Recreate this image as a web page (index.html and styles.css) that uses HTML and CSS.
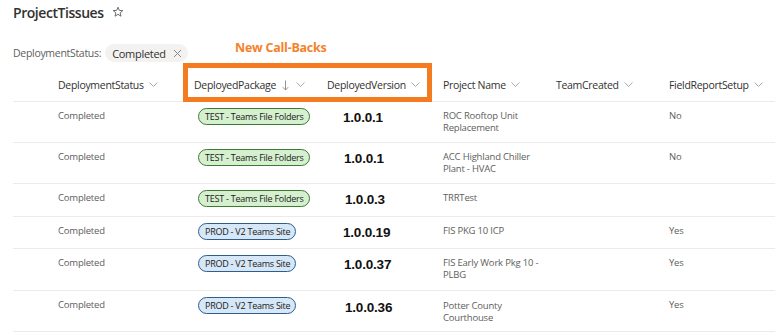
FILE: index.html
```html
<!DOCTYPE html>
<html>
<head>
<meta charset="utf-8">
<link rel="stylesheet" href="styles.css">
</head>
<body>
<div class="page">
  <div class="title">ProjectTissues
    <svg class="star" width="12" height="12" viewBox="0 0 12 12"><path d="M6 1.2 L7.35 4.4 L10.8 4.6 L8.15 6.85 L9 10.2 L6 8.35 L3 10.2 L3.85 6.85 L1.2 4.6 L4.65 4.4 Z" fill="none" stroke="#605e5c" stroke-width="0.9" stroke-linejoin="round"/></svg>
  </div>
  <div class="filters">
    <span class="flabel">DeploymentStatus:</span>
    <span class="chip">Completed <svg class="x" width="9" height="9" viewBox="0 0 9 9"><path d="M1 1 L8 8 M8 1 L1 8" stroke="#8a8886" stroke-width="1"/></svg></span>
  </div>
  <div class="list">
    <div class="row head">
      <div></div>
      <div class="hc">DeploymentStatus <svg class="chev" width="9" height="5" viewBox="0 0 9 5"><path d="M0.5 0.5 L4.5 4.5 L8.5 0.5" fill="none" stroke="#a19f9d" stroke-width="0.9"/></svg></div>
      <div class="hc">DeployedPackage <svg class="sort" width="7" height="11" viewBox="0 0 7 11"><path d="M3.5 0.5 V10 M0.8 7.2 L3.5 10 L6.2 7.2" fill="none" stroke="#8a8886" stroke-width="0.9"/></svg> <svg class="chev" width="9" height="5" viewBox="0 0 9 5"><path d="M0.5 0.5 L4.5 4.5 L8.5 0.5" fill="none" stroke="#a19f9d" stroke-width="0.9"/></svg></div>
      <div class="hc">DeployedVersion <svg class="chev" width="9" height="5" viewBox="0 0 9 5"><path d="M0.5 0.5 L4.5 4.5 L8.5 0.5" fill="none" stroke="#a19f9d" stroke-width="0.9"/></svg></div>
      <div class="hc">Project Name <svg class="chev" width="9" height="5" viewBox="0 0 9 5"><path d="M0.5 0.5 L4.5 4.5 L8.5 0.5" fill="none" stroke="#a19f9d" stroke-width="0.9"/></svg></div>
      <div class="hc">TeamCreated <svg class="chev" width="9" height="5" viewBox="0 0 9 5"><path d="M0.5 0.5 L4.5 4.5 L8.5 0.5" fill="none" stroke="#a19f9d" stroke-width="0.9"/></svg></div>
      <div class="hc">FieldReportSetup <svg class="chev" width="9" height="5" viewBox="0 0 9 5"><path d="M0.5 0.5 L4.5 4.5 L8.5 0.5" fill="none" stroke="#a19f9d" stroke-width="0.9"/></svg></div>
    </div>

    <div class="row tall">
      <div></div>
      <div class="c">Completed</div>
      <div class="c"><span class="pill test">TEST - Teams File Folders</span></div>
      <div class="c"><span class="ver">1.0.0.1</span></div>
      <div class="c">ROC Rooftop Unit<br>Replacement</div>
      <div class="c"></div>
      <div class="c">No</div>
    </div>
    <div class="row tall">
      <div></div>
      <div class="c">Completed</div>
      <div class="c"><span class="pill test">TEST - Teams File Folders</span></div>
      <div class="c"><span class="ver v2">1.0.0.1</span></div>
      <div class="c">ACC Highland Chiller<br>Plant - HVAC</div>
      <div class="c"></div>
      <div class="c">No</div>
    </div>
    <div class="row">
      <div></div>
      <div class="c">Completed</div>
      <div class="c"><span class="pill test">TEST - Teams File Folders</span></div>
      <div class="c"><span class="ver v3">1.0.0.3</span></div>
      <div class="c">TRRTest</div>
      <div class="c"></div>
      <div class="c"></div>
    </div>
    <div class="row short">
      <div></div>
      <div class="c">Completed</div>
      <div class="c"><span class="pill prod">PROD - V2 Teams Site</span></div>
      <div class="c"><span class="ver">1.0.0.19</span></div>
      <div class="c">FIS PKG 10 ICP</div>
      <div class="c"></div>
      <div class="c">Yes</div>
    </div>
    <div class="row taller">
      <div></div>
      <div class="c">Completed</div>
      <div class="c"><span class="pill prod">PROD - V2 Teams Site</span></div>
      <div class="c"><span class="ver v2">1.0.0.37</span></div>
      <div class="c">FIS Early Work Pkg 10 -<br>PLBG</div>
      <div class="c"></div>
      <div class="c">Yes</div>
    </div>
    <div class="row tall">
      <div></div>
      <div class="c">Completed</div>
      <div class="c"><span class="pill prod">PROD - V2 Teams Site</span></div>
      <div class="c"><span class="ver v3 low">1.0.0.36</span></div>
      <div class="c pad">Potter County<br>Courthouse</div>
      <div class="c"></div>
      <div class="c">Yes</div>
    </div>
  </div>

  <div class="callout-label">New Call-Backs</div>
  <div class="callout-box"></div>
</div>
</body>
</html>
```

FILE: styles.css
```css
* { box-sizing: border-box; }
html, body { margin: 0; padding: 0; background: #ffffff; }
body {
  font-family: "Open Sans", "Noto Sans", sans-serif;
  color: #323130;
  width: 775px;
  height: 336px;
  overflow: hidden;
}
.page {
  position: relative;
  padding-left: 13px;
}
.title {
  height: 26px;
  line-height: 26px;
  font-size: 14px;
  font-weight: 600;
  color: #323130;
  display: flex;
  align-items: center;
  gap: 8px;
  letter-spacing: -0.45px;
}
.star { margin-top: -2px; }
.filters {
  margin-top: 18px;
  height: 18px;
  display: flex;
  align-items: center;
  gap: 4px;
}
.flabel {
  font-size: 10.5px;
  color: #605e5c;
  letter-spacing: -0.3px;
}
.chip {
  height: 18px;
  background: #f3f2f1;
  border-radius: 9px;
  padding: 0 6px 0 7px;
  display: inline-flex;
  align-items: center;
  gap: 7px;
  font-size: 11px;
  color: #323130;
  letter-spacing: -0.3px;
}
.list {
  margin-top: 6px;
  width: 762px;
}
.row {
  display: grid;
  grid-template-columns: 45px 136px 133px 116px 113px 113px 1fr;
  border-bottom: 1px solid #edebe9;
  height: 33px;
  align-items: start;
}
.row.short { height: 32px; }
.row.tall { height: 41px; }
.row.taller { height: 42px; }
.row.head {
  height: 34px;
  align-items: center;
}
.hc {
  font-size: 10.5px;
  color: #323130;
  white-space: nowrap;
  display: flex;
  align-items: center;
  gap: 4px;
  letter-spacing: -0.3px;
}
.sort { margin: 1px 2px 0 2px; }
.chev { margin-left: 1px; }
.c {
  padding-top: 8px;
  font-size: 9.5px;
  line-height: 11.5px;
  color: #605e5c;
  letter-spacing: -0.2px;
}
.c.pad { padding-top: 9px; }
.pill {
  display: inline-block;
  margin-top: -2px;
  margin-left: 4px;
  height: 17px;
  line-height: 15px;
  padding: 0 5px 0 6px;
  border-radius: 9px;
  font-size: 9px;
  color: #1b1a19;
  letter-spacing: -0.25px;
  white-space: nowrap;
}
.pill.test {
  background: #d4f0cf;
  border: 1.2px solid #3f7a35;
}
.pill.prod {
  background: #d6e7f7;
  border: 1.2px solid #2e5e8c;
}
.ver {
  display: inline-block;
  margin-left: 16px;
  margin-top: 0;
  font-family: "Liberation Sans", Arial, sans-serif;
  font-weight: 700;
  font-size: 13.5px;
  line-height: 16px;
  color: #111111;
}
.ver.v2 { margin-left: 17px; }
.ver.v3 { margin-left: 18px; }
.ver.low { margin-top: 1px; }
.callout-label {
  position: absolute;
  left: 235px;
  top: 39px;
  font-size: 12.5px;
  font-weight: 700;
  color: #f5822a;
  letter-spacing: -0.25px;
}
.callout-box {
  position: absolute;
  left: 183px;
  top: 63px;
  width: 249px;
  height: 39px;
  border: 5px solid #f47b20;
}
```
